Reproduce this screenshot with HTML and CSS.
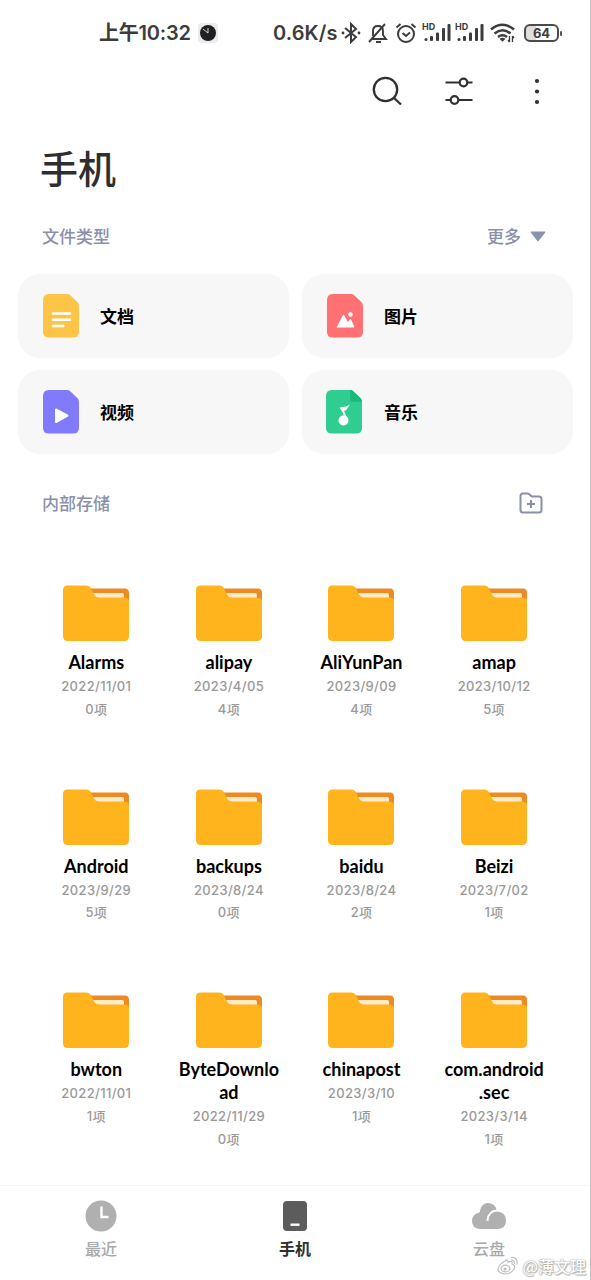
FILE: index.html
```html
<!DOCTYPE html>
<html lang="zh-CN">
<head>
<meta charset="utf-8">
<title>手机</title>
<link rel="stylesheet" href="styles.css">
</head>
<body>
<svg class="defs" width="0" height="0">
  <symbol id="folder" viewBox="0 0 68 56">
    <path fill="#ed8a22" d="M20 3.5H63Q67 3.5 67 8V20H20z"/>
    <path fill="#ffebc7" d="M25 8H60Q62 8 62 10V14H25z"/>
    <path fill="#ffb31d" d="M1 5Q1 .5 5.500 .5H24Q27.500 .5 29 3.500L32 9.500Q33.500 12.500 37 12.500H61Q67 12.500 67 16V51Q67 56 62 56H6Q1 56 1 51z"/>
  </symbol>
  <symbol id="signal" viewBox="0 0 28 20">
    <g fill="#3c3c3c"><circle cx="3" cy="16.500" r="1.500"/><rect x="7" y="13" width="3" height="5" rx="1"/><rect x="13" y="9.500" width="3" height="8.500" rx="1"/><rect x="19" y="5" width="3" height="13" rx="1"/><rect x="24.500" y="1" width="3" height="17" rx="1"/></g>
  </symbol>
</svg>
<main class="screen">
  <header class="status">
    <span class="time">上午10:32</span>
    <svg class="watch" width="20" height="20" viewBox="0 0 20 20"><rect width="20" height="20" rx="4" fill="#e9ebf2"/><circle cx="10" cy="10" r="8" fill="#202020"/><path d="M5 6l5 4V5" fill="none" stroke="#ddd"/></svg>
    <span class="speed">0.6K/s</span>
    <svg class="bt" width="20" height="22" viewBox="0 0 20 22"><path d="M4 6l11 9-5 5V2l5 5-11 9" fill="none" stroke="#3c3c3c" stroke-width="2"/><circle cx="2" cy="11" r="1.400" fill="#3c3c3c"/><circle cx="18" cy="11" r="1.400" fill="#3c3c3c"/></svg>
    <svg class="bell" width="20" height="22" viewBox="0 0 20 22"><path d="M5 14V9q0-5 5-5t5 5v4l3 4H4M1 20L17 2M8 20h5" fill="none" stroke="#3c3c3c" stroke-width="1.900"/></svg>
    <svg class="alarm" width="22" height="22" viewBox="0 0 22 22"><circle cx="11" cy="12" r="8" fill="none" stroke="#3c3c3c" stroke-width="2"/><path d="M1.500 5.500L5.500 2M20.500 5.500L16.500 2M7.500 11l3.500 3 4-3.500" fill="none" stroke="#3c3c3c" stroke-width="2"/></svg>
    <span class="sim"><b>HD</b><svg width="28" height="20"><use href="#signal"/></svg></span>
    <span class="sim second"><b>HD</b><svg width="28" height="20"><use href="#signal"/></svg></span>
    <svg class="wifi" width="26" height="20" viewBox="0 0 26 20"><g fill="none" stroke="#3c3c3c" stroke-width="2.500"><path d="M1 6.500Q12.500-3 24 6.500M4.500 10.500Q12.500 4 20.500 10.500M8 14Q12.500 10.500 17 14"/></g><path d="M9.500 15.800q3-2 6 0l-3 3z" fill="#3c3c3c"/><path d="M19.500 13v6M22.500 13v6M18 17l1.500 2M24 15l-1.500-2" stroke="#3c3c3c" stroke-width="1.300"/></svg>
    <span class="battery">64</span><i class="cap"></i>
  </header>
  <nav class="tools">
    <svg width="32" height="32" viewBox="0 0 32 32"><g fill="none" stroke="#303030" stroke-width="2.300"><circle cx="14.500" cy="14.500" r="11.700"/><path d="M23 23l7 6.500"/></g></svg>
    <svg class="filter" width="30" height="32" viewBox="0 0 30 32"><g fill="none" stroke="#303030" stroke-width="2.200"><path d="M1.500 7.500h14M23.500 7.500h5M1.500 25h5M14.500 25h14"/><circle cx="19.500" cy="7.500" r="3.800"/><circle cx="10.500" cy="25" r="3.800"/></g></svg>
    <svg class="dots" width="8" height="32" viewBox="0 0 8 32"><g fill="#303030"><circle cx="4" cy="6" r="2.100"/><circle cx="4" cy="16.500" r="2.100"/><circle cx="4" cy="27" r="2.100"/></g></svg>
  </nav>
  <h1 class="title">手机</h1>
  <div class="section types-head"><span>文件类型</span><span class="more">更多<svg width="16" height="11" viewBox="0 0 16 11"><path fill="#8a92b2" d="M1.500 .5h13q1.500 0 .6 1.200L9 9.500q-1 1.300-2 0L.9 1.700Q0 .5 1.500 .5z"/></svg></span></div>
  <section class="types">
    <div class="type"><svg width="38" height="46" viewBox="0 0 38 46"><path fill="#fdc446" d="M7 1h18q2 0 3.500 1.400l7 6.800Q37 10.700 37 12.700V39q0 5.500-6 5.500H7q-6 0-6-5.500V7q0-6 6-6z"/><path d="M11 20.500h17M11 26.700h17M11 33h10.500" stroke="#fff" stroke-width="2.500" stroke-linecap="round"/></svg><span>文档</span></div>
    <div class="type"><svg width="38" height="46" viewBox="0 0 38 46"><path fill="#ff7172" d="M7 1h18q2 0 3.500 1.400l7 6.800Q37 10.700 37 12.700V39q0 5.500-6 5.500H7q-6 0-6-5.500V7q0-6 6-6z"/><path fill="#fff" d="M10.500 34.500l6.300-12q.7-1.300 1.500 0l3.700 6.500 1.600-2.300q.8-1.200 1.500 0l3 6.300q.5 1.500-1 1.500z"/><circle cx="24.500" cy="21.500" r="2.300" fill="#fff"/></svg><span>图片</span></div>
    <div class="type"><svg width="38" height="46" viewBox="0 0 38 46"><path fill="#817bfb" d="M7 1h18q2 0 3.500 1.400l7 6.800Q37 10.700 37 12.700V39q0 5.500-6 5.500H7q-6 0-6-5.500V7q0-6 6-6z"/><path fill="#fff" stroke="#fff" stroke-width="2" stroke-linejoin="round" d="M14 20.500v12.500l11.500-6.300z"/></svg><span>视频</span></div>
    <div class="type music"><svg width="38" height="46" viewBox="0 0 38 46"><path fill="#2fce90" d="M7 1h18q2 0 3.500 1.400l7 6.800Q37 10.700 37 12.700V39q0 5.500-6 5.500H7q-6 0-6-5.500V7q0-6 6-6z"/><path fill="#1fb77b" d="M25 1q2 0 3.500 1.400l7 6.800Q37 10.700 37 12.700H28q-3 0-3-3z"/><circle cx="18.500" cy="31.500" r="5" fill="#fff"/><path fill="#fff" d="M14.500 18.500l6.500-1 4-2-3.700 5.500-2.300 1 3.500 7.500-2 2L17.500 23z"/></svg><span>音乐</span></div>
  </section>
  <div class="section storage-head"><span>内部存储</span><svg width="24" height="22" viewBox="0 0 24 22"><path d="M4 1.500h4.500q1 0 1.800.8L12.700 4.500H20q2.500 0 2.500 2.500v11q0 2.500-2.500 2.500H4Q1.500 20.500 1.500 18V4Q1.500 1.500 4 1.500zM12 8v8M8 12h8" fill="none" stroke="#8a90a6" stroke-width="2"/></svg></div>
  <section class="folders">
    <div class="folder"><svg width="68" height="56"><use href="#folder"/></svg><b>Alarms</b><span>2022/11/01</span><span>0项</span></div>
    <div class="folder"><svg width="68" height="56"><use href="#folder"/></svg><b>alipay</b><span>2023/4/05</span><span>4项</span></div>
    <div class="folder"><svg width="68" height="56"><use href="#folder"/></svg><b>AliYunPan</b><span>2023/9/09</span><span>4项</span></div>
    <div class="folder"><svg width="68" height="56"><use href="#folder"/></svg><b>amap</b><span>2023/10/12</span><span>5项</span></div>
    <div class="folder"><svg width="68" height="56"><use href="#folder"/></svg><b>Android</b><span>2023/9/29</span><span>5项</span></div>
    <div class="folder"><svg width="68" height="56"><use href="#folder"/></svg><b>backups</b><span>2023/8/24</span><span>0项</span></div>
    <div class="folder"><svg width="68" height="56"><use href="#folder"/></svg><b>baidu</b><span>2023/8/24</span><span>2项</span></div>
    <div class="folder"><svg width="68" height="56"><use href="#folder"/></svg><b>Beizi</b><span>2023/7/02</span><span>1项</span></div>
    <div class="folder"><svg width="68" height="56"><use href="#folder"/></svg><b>bwton</b><span>2022/11/01</span><span>1项</span></div>
    <div class="folder"><svg width="68" height="56"><use href="#folder"/></svg><b>ByteDownlo<br>ad</b><span>2022/11/29</span><span>0项</span></div>
    <div class="folder"><svg width="68" height="56"><use href="#folder"/></svg><b>chinapost</b><span>2023/3/10</span><span>1项</span></div>
    <div class="folder"><svg width="68" height="56"><use href="#folder"/></svg><b>com.android<br>.sec</b><span>2023/3/14</span><span>1项</span></div>
  </section>
  <footer class="tabs">
    <div class="tab"><svg width="36" height="32" viewBox="0 0 36 32"><circle cx="18" cy="16" r="15.500" fill="#b0b0b0"/><path d="M18.500 6.500v10.500h7" fill="none" stroke="#fff" stroke-width="2.400"/></svg><span>最近</span></div>
    <div class="tab active"><svg width="36" height="32" viewBox="0 0 36 32"><rect x="6" y="1" width="24" height="30" rx="4" fill="#5c5c5c"/><path d="M13.500 24.700h9" stroke="#fff" stroke-width="2.400"/></svg><span>手机</span></div>
    <div class="tab"><svg width="36" height="32" viewBox="0 0 36 32"><path fill="#b0b0b0" d="M9 29q-8-.5-8-8 0-7 7.500-8.500Q10 3 17 3q6.500 0 8.500 6.500Q17 10 15.500 20v1h2q0-9 9-9.500 8.500 1 8.500 9 0 8-8 8.500z"/></svg><span>云盘</span></div>
  </footer>
  <div class="watermark"><svg width="22" height="20" viewBox="0 0 22 20"><g fill="#fff" stroke="#bdbdbd" stroke-width="1.200"><path d="M8 5q3-2 3 1 5-2 4 2 4 2 2 5-3 5-9 5-7-1-7-5 1-5 7-8z"/><ellipse cx="8.500" cy="12.500" rx="4.500" ry="3.300"/><path d="M14 4q4 0 3.500 4M14 1.500q7-.5 6 7" fill="none"/></g><circle cx="8" cy="13" r="1.500" fill="#bbb"/></svg><span>@薄文理</span></div>
</main>
</body>
</html>
```
FILE: styles.css
```css
* { box-sizing: border-box; }
body { margin: 0; background: #fff; font-family: Lato, "Noto Sans CJK SC", sans-serif; }
.defs { position: absolute; }
svg { display: block; flex: none; }
.screen { position: relative; width: 591px; height: 1280px; overflow: hidden; border-right: 1px solid #c4c4c4; display: flex; flex-direction: column; }

.status { display: flex; align-items: center; height: 66px; flex: none; padding-left: 99px; color: #3c3c3c; font: 600 20px/24px Inter, "Noto Sans CJK SC", sans-serif; white-space: nowrap; }
.time { width: 99px; letter-spacing: -.2px; }
.speed { width: 65px; margin-left: 55px; letter-spacing: .1px; }
.bt { margin-left: 3px; }
.bell { margin-left: 7px; }
.alarm { margin-left: 7px; }
.sim { position: relative; margin-left: 6px; }
.second { margin-left: 5px; }
.sim b { position: absolute; left: -1px; top: -1px; font: 700 9px/9px Inter, sans-serif; }
.wifi { margin-left: 6px; }
.battery { margin-left: 8px; width: 35px; height: 18px; border: 2px solid #4b4b4b; border-radius: 6px; font: 700 13px/14px Inter, sans-serif; text-align: center; background: linear-gradient(90deg, #dedede 0 10px, #fff 10px); }
.cap { width: 2px; height: 5px; margin-left: 1px; background: #555; border-radius: 1px; }

.tools { display: flex; height: 50px; flex: none; align-items: center; padding: 0 0 0 371px; }
.filter { margin-left: 41px; }
.dots { margin-left: 59px; }
.title { margin: 24px 0 0 40px; height: 56px; flex: none; font: 500 38px/54px "Noto Sans CJK SC", sans-serif; color: #2e2e2e; }

.section { display: flex; justify-content: space-between; align-items: center; height: 24px; flex: none; margin: 0 47px 0 42px; color: #8a90a8; font: 500 17px/24px "Noto Sans CJK SC", sans-serif; }
.types-head { margin-top: 28px; margin-right: 44px; }
.more { display: flex; align-items: center; gap: 9px; }
.types { display: grid; grid-template-columns: 271px 271px; grid-template-rows: 84px 84px; gap: 12px 13px; margin: 26px 0 0 18px; flex: none; }
.type { display: flex; align-items: center; padding-left: 24px; gap: 20px; border-radius: 22px; background: #f7f7f7; font: 700 17px/24px "Noto Sans CJK SC", sans-serif; color: #000; }
.music { padding-left: 23px; gap: 21px; }
.storage-head { margin-top: 37px; }

.folders { display: grid; grid-template-columns: repeat(4, 132.6px); grid-auto-rows: 203.5px; margin: 70px 0 0 30px; flex: none; height: 600px; }
.folder { display: flex; flex-direction: column; align-items: center; text-align: center; }
.folder b { margin-top: 10px; font: 700 18px/23px Lato, sans-serif; color: #000; white-space: nowrap; }
.folder span { font: 500 13px/22.5px Inter, "Noto Sans CJK SC", sans-serif; letter-spacing: .35px; color: #999; }
.folder b + span { margin-top: 1px; }

.tabs { display: flex; justify-content: space-between; flex: none; padding: 14px 83px 0; height: 95px; margin-top: 0; background: #fff; border-top: 1px solid #f6f6f6; }
.tab { display: flex; flex-direction: column; align-items: center; font: 500 16px/24px "Noto Sans CJK SC", sans-serif; color: #aaa; gap: 4px; }
.active { color: #2e2e2e; font-weight: 700; }
.watermark { position: absolute; right: 4px; bottom: 4px; display: flex; align-items: center; gap: 3px; font: 500 16px/20px "Noto Sans CJK SC", sans-serif; color: #fff; text-shadow: 0 0 1px #999, 0 0 2px #aaa, 1px 1px 1px #bbb; }
```
